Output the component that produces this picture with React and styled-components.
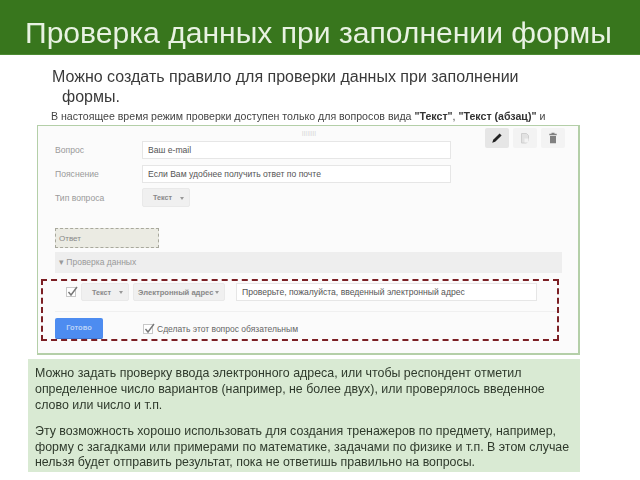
import React from 'react';
import styled, { createGlobalStyle } from 'styled-components';

const GlobalStyle = createGlobalStyle`
  html, body {
    margin: 0;
    padding: 0;
    background: #fff;
    font-family: "Liberation Sans", Arial, sans-serif;
  }
`;

const Page = styled.div`
  width: 640px;
  height: 480px;
  overflow: hidden;
  display: flex;
  flex-direction: column;
  filter: blur(0.35px);
`;

const Header = styled.header`
  height: 55px;
  flex: none;
  box-sizing: border-box;
  padding: 17px 0 0 25px;
  background: #38761d;
  border-bottom: 1px solid #4d8a33;
  color: #e8f2e2;
  font-size: 30.1px;
  line-height: 32px;
  white-space: nowrap;
`;

const Lead = styled.p`
  margin: 12px 0 0 52px;
  width: 490px;
  font-size: 16px;
  line-height: 20px;
  color: #3a3a3a;
  span {
    display: block;
    padding-left: 10px;
  }
`;

const Note = styled.p`
  margin: 3px 0 0 51px;
  font-size: 10.6px;
  line-height: 12px;
  color: #444;
  white-space: nowrap;
  b {
    color: #333;
  }
`;

const Panel = styled.section`
  position: relative;
  box-sizing: border-box;
  width: 543px;
  height: 230px;
  margin: 3px 0 0 37px;
  padding: 15px 18px 0 17px;
  background: #fbfbfb;
  border: 1px solid #b4cfa8;
  border-right-width: 2px;
  border-bottom-width: 2px;
`;

const Tools = styled.div`
  position: absolute;
  top: 2px;
  right: 13px;
  display: flex;
  gap: 4px;
`;

const ToolButton = styled.div`
  width: 24px;
  height: 20px;
  display: flex;
  align-items: center;
  justify-content: center;
  border-radius: 2px;
  background: ${(props) => (props.$active ? '#e6e6e6' : '#f3f3f3')};
`;

const Grip = styled.div`
  position: absolute;
  top: 4px;
  left: 264px;
  font-size: 5px;
  letter-spacing: 0.5px;
  color: #c4c4c4;
`;

const FieldRow = styled.div`
  display: flex;
  align-items: center;
  height: 18px;
  margin-bottom: 6px;
`;

const FieldLabel = styled.div`
  width: 87px;
  font-size: 8.6px;
  color: #9a9a9a;
`;

const TextInput = styled.div`
  box-sizing: border-box;
  width: ${(props) => props.$width}px;
  height: 18px;
  padding-left: 5px;
  background: #fff;
  border: 1px solid #e6e6e6;
  font-size: 8.6px;
  line-height: 16px;
  color: #555;
  white-space: nowrap;
`;

const Select = styled.div`
  box-sizing: border-box;
  display: flex;
  align-items: center;
  justify-content: space-between;
  width: ${(props) => props.$width}px;
  height: ${(props) => props.$height || 18}px;
  margin-top: ${(props) => props.$shift || 0}px;
  padding: 0 5px 0 ${(props) => props.$pad || 10}px;
  background: #f0f0f0;
  border: 1px solid #e9e9e9;
  border-radius: 2px;
  font-size: ${(props) => props.$size || 7.2}px;
  font-weight: bold;
  color: #888;
  white-space: nowrap;
  &::after {
    content: '';
    border: 2.5px solid transparent;
    border-top: 3px solid #999;
    margin-top: 3px;
  }
`;

const AnswerBox = styled.div`
  box-sizing: border-box;
  width: 104px;
  height: 20px;
  margin-top: 21px;
  padding-left: 3px;
  background: #ebebe3;
  border: 1px dashed #a8a89c;
  font-size: 8px;
  line-height: 19px;
  color: #888;
`;

const SectionBar = styled.div`
  box-sizing: border-box;
  width: 507px;
  height: 21px;
  margin-top: 4px;
  padding-left: 4px;
  background: #eeeeee;
  font-size: 8.5px;
  line-height: 21px;
  color: #999;
`;

const RuleRow = styled.div`
  display: flex;
  align-items: center;
  height: 39px;
  padding-left: 11px;
  box-sizing: border-box;
  border-bottom: 1px solid #f0f0f0;
`;

const CheckBox = styled.div`
  box-sizing: border-box;
  flex: none;
  width: 10px;
  height: 10px;
  margin-right: ${(props) => props.$gap}px;
  background: #fff;
  border: 1px solid #c8c8c8;
  position: relative;
  svg {
    position: absolute;
    left: -1px;
    top: -3px;
  }
`;

const RuleSelects = styled.div`
  display: flex;
  gap: 4px;
  margin-right: 11px;
`;

const FooterRow = styled.div`
  display: flex;
  align-items: center;
  margin-top: 6px;
`;

const DoneButton = styled.div`
  width: 48px;
  height: 20px;
  margin-right: 40px;
  background: #4d8cf0;
  border-radius: 2px;
  border-bottom: 1px solid #3f78d4;
  font-size: 7.5px;
  font-weight: bold;
  line-height: 20px;
  text-align: center;
  color: #b9d2f7;
`;

const RequiredLabel = styled.div`
  font-size: 8.5px;
  color: #666;
`;

const Highlight = styled.div`
  position: absolute;
  left: 3px;
  top: 153px;
  width: 518px;
  height: 62px;
  box-sizing: border-box;
  pointer-events: none;
  border: 2px dashed #7b1f24;
`;

const Summary = styled.section`
  box-sizing: border-box;
  width: 552px;
  height: 113px;
  margin: 4px 0 0 28px;
  padding: 7px 0 0 7px;
  background: #d9ead3;
  color: #2f3a2c;
  font-size: 12.4px;
  line-height: 15.8px;
  white-space: nowrap;
  p {
    margin: 0 0 10.5px;
  }
`;

function PencilIcon() {
  return (
    <svg width="12" height="12" viewBox="0 0 12 12">
      <path d="M8.6 1.4l2 2L4.2 9.8 1.2 10.8l1-3z" fill="#222" />
    </svg>
  );
}

function CopyIcon() {
  return (
    <svg width="12" height="12" viewBox="0 0 12 12">
      <path d="M2.5 1.5h5l2 2v5l-2 2.5h-5z" fill="#e2e2e2" stroke="#cfcfcf" />
      <path d="M5.5 6.5h4v4h-4z" fill="#f3f3f3" />
    </svg>
  );
}

function TrashIcon() {
  return (
    <svg width="12" height="12" viewBox="0 0 12 12">
      <path d="M4.5 0.8h3v1h2.2v1.4H2.3V1.8h2.2zM3 4h6v7.2H3z" fill="#808080" />
    </svg>
  );
}

function CheckMark() {
  return (
    <svg width="13" height="13" viewBox="0 0 13 13">
      <path d="M2.5 7l2.5 3 6-8" fill="none" stroke="#777" strokeWidth="1.4" />
    </svg>
  );
}

export default function App() {
  return (
    <Page>
      <GlobalStyle />
      <Header>Проверка данных при заполнении формы</Header>
      <Lead>
        Можно создать правило для проверки данных при заполнении
        <span>формы.</span>
      </Lead>
      <Note>
        В настоящее время режим проверки доступен только для вопросов вида <b>"Текст"</b>, <b>"Текст (абзац)"</b> и
      </Note>
      <Panel>
        <Grip>||||||||</Grip>
        <Tools>
          <ToolButton $active><PencilIcon /></ToolButton>
          <ToolButton><CopyIcon /></ToolButton>
          <ToolButton><TrashIcon /></ToolButton>
        </Tools>
        <FieldRow>
          <FieldLabel>Вопрос</FieldLabel>
          <TextInput $width={309}>Ваш e-mail</TextInput>
        </FieldRow>
        <FieldRow>
          <FieldLabel>Пояснение</FieldLabel>
          <TextInput $width={309}>Если Вам удобнее получить ответ по почте</TextInput>
        </FieldRow>
        <FieldRow>
          <FieldLabel>Тип вопроса</FieldLabel>
          <Select $width={48} $height={19} $shift={-1}>Текст</Select>
        </FieldRow>
        <AnswerBox>Ответ</AnswerBox>
        <SectionBar>▾ Проверка данных</SectionBar>
        <RuleRow>
          <CheckBox $gap={5}><CheckMark /></CheckBox>
          <RuleSelects>
            <Select $width={48}>Текст</Select>
            <Select $width={92} $pad={4} $size={7.6}>Электронный адрес</Select>
          </RuleSelects>
          <TextInput $width={301}>Проверьте, пожалуйста, введенный электронный адрес</TextInput>
        </RuleRow>
        <FooterRow>
          <DoneButton>Готово</DoneButton>
          <CheckBox $gap={4}><CheckMark /></CheckBox>
          <RequiredLabel>Сделать этот вопрос обязательным</RequiredLabel>
        </FooterRow>
        <Highlight />
      </Panel>
      <Summary>
        <p>
          Можно задать проверку ввода электронного адреса, или чтобы респондент отметил<br />
          определенное число вариантов (например, не более двух), или проверялось введенное<br />
          слово или число и т.п.
        </p>
        <p>
          Эту возможность хорошо использовать для создания тренажеров по предмету, например,<br />
          форму с загадками или примерами по математике, задачами по физике и т.п. В этом случае<br />
          нельзя будет отправить результат, пока не ответишь правильно на вопросы.
        </p>
      </Summary>
    </Page>
  );
}
